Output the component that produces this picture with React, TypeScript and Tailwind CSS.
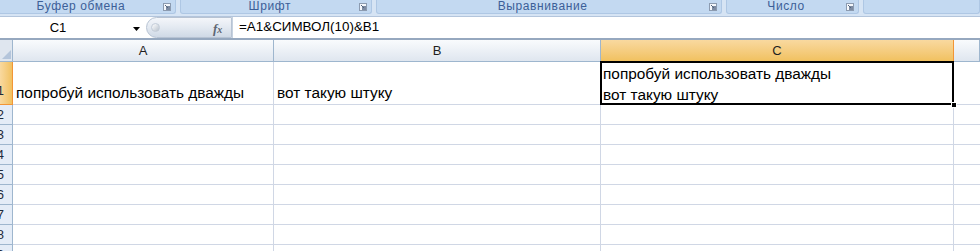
import React from "react";

const ribbonGroups = [
  { label: "Буфер обмена", width: 182 },
  { label: "Шрифт", width: 196 },
  { label: "Выравнивание", width: 354 },
  { label: "Число", width: 136 },
  { label: "", width: 120 },
];

function Launcher() {
  return (
    <svg width="8" height="8" viewBox="0 0 8 8" className="shrink-0">
      <rect x="0.5" y="0.5" width="7" height="7" fill="#f4f7fb" stroke="#8c9bb0" />
      <rect x="3" y="3" width="4" height="4" fill="#7d8ca3" />
      <path d="M2 2 L5 5" stroke="#55657d" strokeWidth="1" />
    </svg>
  );
}

function Ribbon() {
  return (
    <div className="flex h-[16px] bg-[#d6e4f4] gap-[4px] -ml-[2px]">
      {ribbonGroups.map((g, i) => (
        <div
          key={i}
          style={{ width: g.width }}
          className="h-[14px] flex items-center bg-[#c3d9f1] rounded-b-[3px] border-b border-x border-[#aec7e4] pr-[4px]"
        >
          <div className="flex-1 text-center text-[12px] leading-[13px] text-[#3c5f98] tracking-[0.6px]">{g.label}</div>
          {g.label && <Launcher />}
        </div>
      ))}
    </div>
  );
}

function FormulaBar() {
  return (
    <div className="flex h-[24px] bg-white border-t border-[#b3c5dc] border-b-2 border-b-[#96a8bf]">
      <div className="w-[144px] flex items-center relative">
        <div className="flex-1 text-center text-[13px] text-black pr-[28px]">C1</div>
        <svg width="7" height="4" viewBox="0 0 7 4" className="absolute left-[133px] top-[10px]">
          <path d="M0 0 H7 L3.5 4 Z" fill="#000" />
        </svg>
      </div>
      <div className="w-[86px] h-[21px] ml-[2px] rounded-l-full bg-gradient-to-b from-[#f4f6fa] via-[#e3e9f1] to-[#cfd9e6] border border-[#b7c3d3] flex items-center relative">
        <div className="w-[9px] h-[9px] rounded-full ml-[4px] bg-gradient-to-br from-[#ffffff] to-[#b9c2cd] border border-[#c3ccd8]" />
        <span className="absolute left-[66px] top-[1px] text-[13px] italic font-bold text-[#5d6673]" style={{ fontFamily: "'Liberation Serif', serif" }}>
          f<span className="text-[10px]">x</span>
        </span>
      </div>
      <div className="w-[1px] bg-[#c6d2e0]" />
      <div className="pl-[6px] flex items-center text-[13.4px] text-black">=A1&amp;СИМВОЛ(10)&amp;B1</div>
    </div>
  );
}

const headerCls = "border-r border-b border-[#9eb6ce] bg-gradient-to-b from-[#f9fbfd] to-[#dfe6ef] text-[13px] text-[#1f1f1f] flex items-center justify-center";

function RowHeader({ n, tall, active }: { n: number; tall?: boolean; active?: boolean }) {
  return (
    <div
      className={`overflow-hidden flex justify-end pr-[8px] border-r border-b text-[13px] text-[#1f2a3a] ${tall ? "h-[43px] items-end pb-[4px]" : "h-[20px] items-center"} ${
        active ? "bg-gradient-to-r from-[#f9d99f] to-[#f1c15f] border-[#f29536]" : "bg-[#e4ecf7] border-[#9eb6ce]"
      }`}
    >
      {n}
    </div>
  );
}

export default function App() {
  const rows = [2, 3, 4, 5, 6, 7, 8, 9];
  return (
    <div className="w-[980px] h-[251px] overflow-hidden bg-white" style={{ fontFamily: "'Liberation Sans', Arial, sans-serif" }}>
      <Ribbon />
      <FormulaBar />
      <div className="grid grid-cols-[13px_261px_327px_353px_1fr]">
        {/* header row */}
        <div className="h-[22px] border-r border-b border-[#9eb6ce] bg-[#dfe6ef] relative">
          <svg width="9" height="9" viewBox="0 0 9 9" className="absolute right-[1px] bottom-[2px]">
            <path d="M9 0 V9 H0 Z" fill="#b4c5db" />
          </svg>
        </div>
        <div className={`h-[22px] ${headerCls}`}>A</div>
        <div className={`h-[22px] ${headerCls}`}>B</div>
        <div className="h-[22px] border-r border-b border-[#f29536] bg-gradient-to-b from-[#f9d99f] to-[#f1c15f] text-[13px] text-[#1f1f1f] flex items-center justify-center">
          C
        </div>
        <div className={`h-[22px] ${headerCls}`}></div>

        {/* row 1 */}
        <RowHeader n={1} tall active />
        <div className="h-[43px] border-r border-b border-[#d0d7e5] flex items-end pl-[3px] pb-[1px] text-[15.4px] leading-[20px] text-black whitespace-nowrap">
          попробуй использовать дважды
        </div>
        <div className="h-[43px] border-r border-b border-[#d0d7e5] flex items-end pl-[3px] pb-[1px] text-[15.4px] leading-[20px] text-black whitespace-nowrap">
          вот такую штуку
        </div>
        <div className="h-[43px] border-r border-b border-[#d0d7e5] relative pl-[2px] pt-[1px] text-[15.4px] leading-[21px] text-black whitespace-nowrap">
          <div>попробуй использовать дважды</div>
          <div>вот такую штуку</div>
          <div className="absolute -left-[1px] -top-[1px] -right-[1px] -bottom-[1px] border-2 border-black pointer-events-none" />
          <div className="absolute -right-[4px] -bottom-[4px] w-[6px] h-[6px] bg-black border border-white" />
        </div>
        <div className="h-[43px] border-b border-[#d0d7e5]" />

        {rows.map((r) => (
          <React.Fragment key={r}>
            <RowHeader n={r} />
            <div className="h-[20px] border-r border-b border-[#d0d7e5]" />
            <div className="h-[20px] border-r border-b border-[#d0d7e5]" />
            <div className="h-[20px] border-r border-b border-[#d0d7e5]" />
            <div className="h-[20px] border-b border-[#d0d7e5]" />
          </React.Fragment>
        ))}
      </div>
    </div>
  );
}
